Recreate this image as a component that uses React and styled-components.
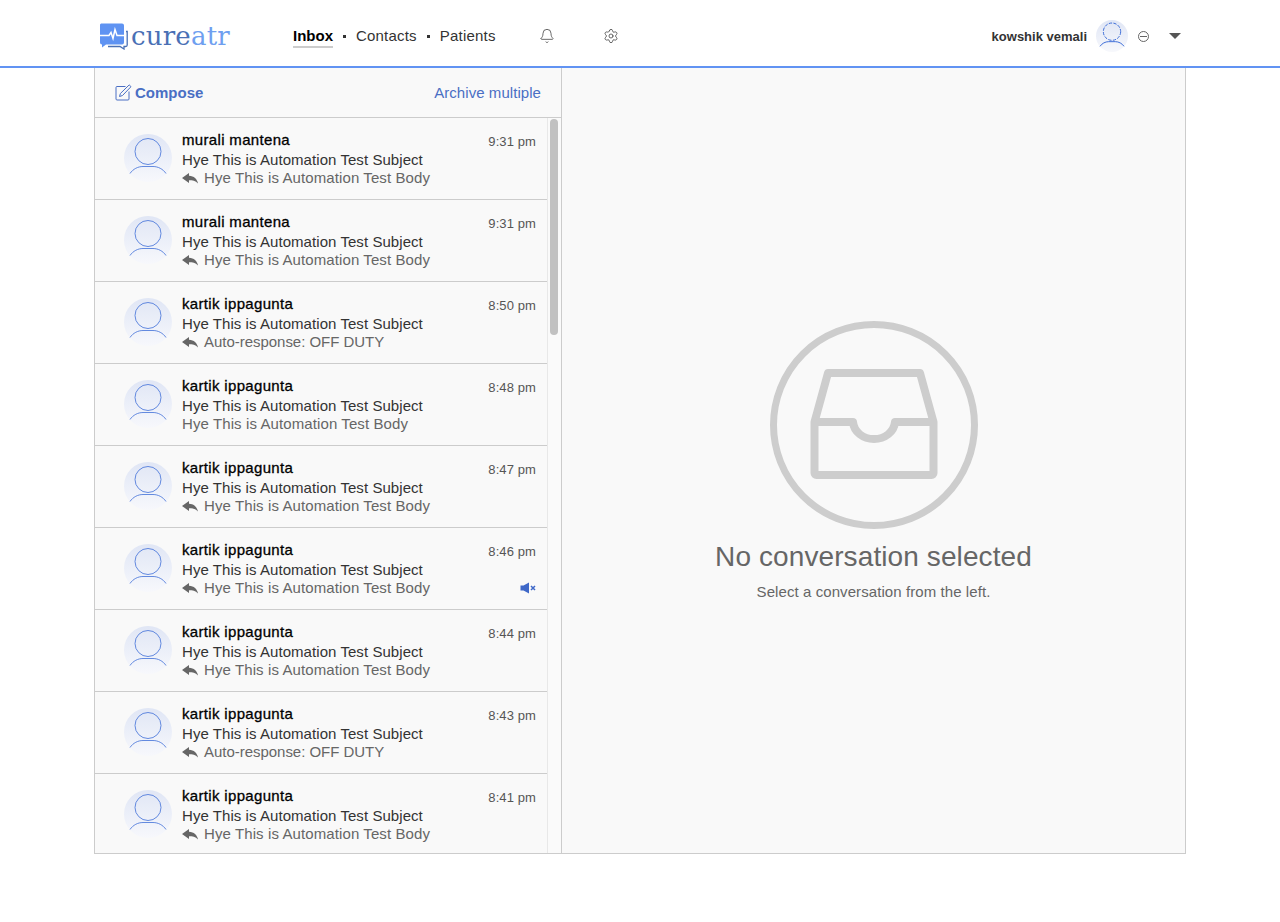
import styled, { createGlobalStyle } from "styled-components";
import { Bell, Settings } from "lucide-react";

const GlobalStyle = createGlobalStyle`
  html, body {
    margin: 0;
    padding: 0;
    background: #fff;
    font-family: "Liberation Sans", Arial, sans-serif;
  }
  * { box-sizing: border-box; }
`;

const messages = [
  { name: "murali mantena", time: "9:31 pm", body: "Hye This is Automation Test Body", replied: true },
  { name: "murali mantena", time: "9:31 pm", body: "Hye This is Automation Test Body", replied: true },
  { name: "kartik ippagunta", time: "8:50 pm", body: "Auto-response: OFF DUTY", replied: true, short: true },
  { name: "kartik ippagunta", time: "8:48 pm", body: "Hye This is Automation Test Body" },
  { name: "kartik ippagunta", time: "8:47 pm", body: "Hye This is Automation Test Body", replied: true },
  { name: "kartik ippagunta", time: "8:46 pm", body: "Hye This is Automation Test Body", replied: true, muted: true },
  { name: "kartik ippagunta", time: "8:44 pm", body: "Hye This is Automation Test Body", replied: true },
  { name: "kartik ippagunta", time: "8:43 pm", body: "Auto-response: OFF DUTY", replied: true, short: true },
  { name: "kartik ippagunta", time: "8:41 pm", body: "Hye This is Automation Test Body", replied: true },
];

function LogoMark() {
  return (
    <svg width="30" height="27" viewBox="0 0 30 27">
      <path
        d="M2 0.500h21a2 2 0 0 1 2 2v17a2 2 0 0 1-2 2H7l-4 3v-3a2 2 0 0 1-2-2V1.500z"
        fill="#5f93f2"
      />
      <path
        d="M27 8.500h1.200v13.500a1.500 1.500 0 0 1-1.500 1.500H25v2.500l-4-2.500H9"
        fill="none"
        stroke="#4a70b5"
        strokeWidth="1.300"
      />
      <path
        d="M1 12.500h9l2-3 2 6 2-9 2 6h7"
        fill="none"
        stroke="#fff"
        strokeWidth="1.500"
      />
    </svg>
  );
}

function Avatar({ size, dashed }) {
  return (
    <AvatarCircle $size={size}>
      <svg width={size} height={size} viewBox="0 0 48 48" fill="none">
        <circle
          cx="24"
          cy="17.500"
          r="13"
          stroke="#3f6fd8"
          strokeWidth={dashed ? 1.500 : 0.8}
          strokeDasharray={dashed ? "5 2" : undefined}
        />
        <path
          d="M6 39.500c3-4.500 8-7 13-7h10c5 0 10 2.500 13 7"
          stroke="#3f6fd8"
          strokeWidth={dashed ? 1.500 : 0.8}
        />
      </svg>
    </AvatarCircle>
  );
}

function ReplyArrow() {
  return (
    <svg width="16" height="11" viewBox="0 0 16 11">
      <path
        d="M7 0 0 5l7 5V7.200c3.500 0 6.500 0.500 9 3.300C15 6 12 3 7 2.800z"
        fill="#666"
      />
    </svg>
  );
}

function MuteIcon() {
  return (
    <svg width="16" height="12" viewBox="0 0 16 12">
      <path d="M0.500 3.500h3L9 0.500v11l-5.500-3h-3z" fill="#3f68c8" />
      <path d="M11 4l4 4M15 4l-4 4" stroke="#3f68c8" strokeWidth="1.500" />
    </svg>
  );
}

function ComposeIcon() {
  return (
    <svg width="17" height="17" viewBox="0 0 17 17" fill="none" stroke="#4a6fc4" strokeWidth="1">
      <path d="M10.500 2.500H2a1 1 0 0 0-1 1V15a1 1 0 0 0 1 1h11a1 1 0 0 0 1-1V7.500" />
      <path d="M14.200 0.900 16 2.700 7.500 11.500l-3 1 0.900-3z" />
    </svg>
  );
}

function EmptyInbox() {
  return (
    <svg width="208" height="208" viewBox="0 0 208 208" fill="none" stroke="#cdcdcd">
      <circle cx="104" cy="104" r="100.500" strokeWidth="7" />
      <path
        d="M44.500 101 58 52h92l13.500 49v51a2 2 0 0 1-2 2h-115a2 2 0 0 1-2-2z"
        strokeWidth="8"
        strokeLinejoin="round"
      />
      <path
        d="M44 101h39c1 10 10 17 21 17s20-7 21-17h39"
        strokeWidth="8"
        strokeLinejoin="round"
      />
    </svg>
  );
}

export default function App() {
  return (
    <>
      <GlobalStyle />
      <Header>
        <HeaderInner>
          <Logo>
            <LogoMark />
            <LogoText>
              cure<span>atr</span>
            </LogoText>
          </Logo>
          <Nav>
            <NavLink $active>Inbox</NavLink>
            <NavDot />
            <NavLink>Contacts</NavLink>
            <NavDot />
            <NavLink>Patients</NavLink>
          </Nav>
          <NavIcons>
            <Bell size={16} strokeWidth={1.2} />
            <Settings size={16} strokeWidth={1.2} />
          </NavIcons>
          <UserBox>
            <UserName>kowshik vemali</UserName>
            <Avatar size={32} dashed />
            <StatusIcon />
            <Caret />
          </UserBox>
        </HeaderInner>
      </Header>
      <Main>
        <LeftPanel>
          <Toolbar>
            <ComposeButton>
              <ComposeIcon />
              Compose
            </ComposeButton>
            <ArchiveLink>Archive multiple</ArchiveLink>
          </Toolbar>
          <ListArea>
            <List>
              {messages.map((m, i) => (
                <Row key={i}>
                  <Avatar size={48} />
                  <RowText>
                    <RowTop>
                      <Name>{m.name}</Name>
                      <Time>{m.time}</Time>
                    </RowTop>
                    <Subject>Hye This is Automation Test Subject</Subject>
                    <BodyLine>
                      {m.replied && <ReplyArrow />}
                      <BodyText $short={m.short}>{m.body}</BodyText>
                      {m.muted && (
                        <MuteWrap>
                          <MuteIcon />
                        </MuteWrap>
                      )}
                    </BodyLine>
                  </RowText>
                </Row>
              ))}
            </List>
            <ScrollTrack>
              <ScrollThumb />
            </ScrollTrack>
          </ListArea>
        </LeftPanel>
        <RightPanel>
          <EmptyInbox />
          <EmptyTitle>No conversation selected</EmptyTitle>
          <EmptySub>Select a conversation from the left.</EmptySub>
        </RightPanel>
      </Main>
    </>
  );
}

const Header = styled.header`
  height: 68px;
  background: #fff;
  border-bottom: 2px solid #6193f3;
`;

const HeaderInner = styled.div`
  width: 1092px;
  margin: 0 auto;
  height: 66px;
  display: flex;
  align-items: center;
  padding: 6px 5px 0 5px;
`;

const Logo = styled.div`
  display: flex;
  align-items: center;
  gap: 2px;
  width: 194px;
`;

const LogoText = styled.span`
  font-family: "DejaVu Serif", serif;
  font-size: 26px;
  font-weight: 400;
  letter-spacing: 0.2px;
  color: #4a70b5;
  line-height: 29px;
  span {
    color: #6f9ff0;
  }
`;

const Nav = styled.nav`
  display: flex;
  align-items: center;
`;

const NavLink = styled.a`
  font-size: 15px;
  line-height: 20px;
  letter-spacing: ${(p) => (p.$active ? 0 : "0.2px")};
  color: ${(p) => (p.$active ? "#000" : "#333")};
  font-weight: ${(p) => (p.$active ? 700 : 400)};
  border-bottom: 2px solid ${(p) => (p.$active ? "#ccc" : "transparent")};
  margin-top: 1px;
`;

const NavDot = styled.span`
  width: 3px;
  height: 3px;
  background: #333;
  margin: 0 10px;
`;

const NavIcons = styled.div`
  display: flex;
  align-items: center;
  gap: 48px;
  margin-left: 43px;
  color: #444;
`;

const UserBox = styled.div`
  margin-left: auto;
  display: flex;
  align-items: center;
`;

const UserName = styled.span`
  font-size: 13px;
  font-weight: 700;
  color: #333;
  margin-right: 9px;
`;

const AvatarCircle = styled.div`
  width: ${(p) => p.$size}px;
  height: ${(p) => p.$size}px;
  flex: none;
  border-radius: 50%;
  background: linear-gradient(180deg, #e0e6f5 0%, #f7f8fc 100%);
`;

const StatusIcon = styled.span`
  width: 11px;
  height: 11px;
  border: 1px solid #666;
  border-radius: 50%;
  margin-left: 10px;
  position: relative;
  &::after {
    content: "";
    position: absolute;
    left: 1px;
    right: 1px;
    top: 4px;
    height: 1px;
    background: #666;
  }
`;

const Caret = styled.span`
  width: 0;
  height: 0;
  margin-left: 20px;
  border-left: 6px solid transparent;
  border-right: 6px solid transparent;
  border-top: 6px solid #555;
`;

const Main = styled.main`
  width: 1092px;
  height: 786px;
  margin: 0 auto;
  display: flex;
  border: 1px solid #ccc;
  border-top: 0;
  background: #f9f9f9;
`;

const LeftPanel = styled.section`
  width: 467px;
  flex: none;
  border-right: 1px solid #ccc;
  display: flex;
  flex-direction: column;
`;

const Toolbar = styled.div`
  height: 50px;
  flex: none;
  display: flex;
  align-items: center;
  justify-content: space-between;
  padding: 0 20px;
  border-bottom: 1px solid #ccc;
`;

const ComposeButton = styled.a`
  display: flex;
  align-items: center;
  gap: 3px;
  font-size: 15px;
  font-weight: 700;
  color: #4a6fc4;
`;

const ArchiveLink = styled.a`
  font-size: 15px;
  letter-spacing: 0.06px;
  color: #4a6fc4;
`;

const ListArea = styled.div`
  flex: 1;
  min-height: 0;
  display: flex;
`;

const List = styled.div`
  flex: 1;
  min-width: 0;
  overflow: hidden;
`;

const Row = styled.div`
  height: 82px;
  display: flex;
  padding: 16px 11px 0 29px;
  gap: 10px;
  border-bottom: 1px solid #ccc;
  &:last-child {
    border-bottom: 0;
  }
`;

const RowText = styled.div`
  flex: 1;
  min-width: 0;
  margin-top: -4px;
`;

const RowTop = styled.div`
  display: flex;
  justify-content: space-between;
  align-items: center;
  height: 20px;
`;

const Name = styled.span`
  font-size: 15px;
  letter-spacing: 0.33px;
  color: #000;
  margin-bottom: 2px;
  -webkit-text-stroke: 0.3px #000;
`;

const Time = styled.span`
  font-size: 13px;
  letter-spacing: 0.1px;
  color: #555;
  margin-top: 3px;
`;

const Subject = styled.div`
  font-size: 15px;
  line-height: 18px;
  letter-spacing: 0.06px;
  margin-top: 1px;
  color: #333;
`;

const BodyLine = styled.div`
  display: flex;
  align-items: center;
  gap: 6px;
  height: 18px;
  margin-top: -1px;
  svg {
    margin-top: 2px;
  }
`;

const BodyText = styled.span`
  font-size: 15px;
  letter-spacing: ${(p) => (p.$short ? "-0.03px" : "0.1px")};
  color: #666;
`;

const MuteWrap = styled.span`
  margin-left: auto;
  display: flex;
`;

const ScrollTrack = styled.div`
  width: 14px;
  flex: none;
  background: #fafafa;
  border-left: 1px solid #e8e8e8;
  padding: 1px 3px 0 2px;
`;

const ScrollThumb = styled.div`
  width: 8px;
  height: 216px;
  border-radius: 4px;
  background: #c1c1c1;
`;

const RightPanel = styled.section`
  flex: 1;
  min-width: 0;
  display: flex;
  flex-direction: column;
  align-items: center;
  padding-top: 253px;
`;

const EmptyTitle = styled.h2`
  margin: 12px 0 0;
  font-size: 28px;
  letter-spacing: 0.1px;
  line-height: 32px;
  font-weight: 400;
  color: #666;
`;

const EmptySub = styled.p`
  margin: 10px 0 0;
  font-size: 15px;
  letter-spacing: 0.08px;
  line-height: 18px;
  color: #666;
`;
